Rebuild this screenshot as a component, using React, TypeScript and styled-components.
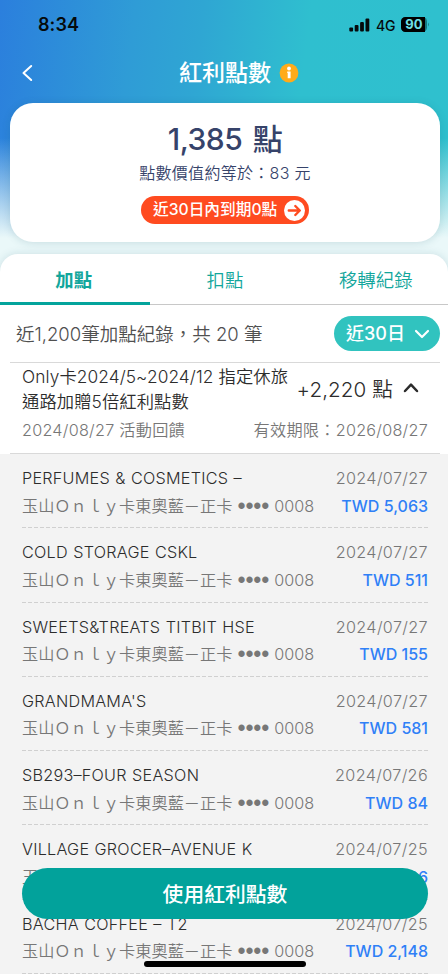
import React from "react";
import styled, { createGlobalStyle } from "styled-components";

const Global = createGlobalStyle`
  * { box-sizing: border-box; }
  body { margin: 0; background: #f3f3f3; }
  button { font: inherit; border: 0; padding: 0; background: none; color: inherit; }
`;

const Screen = styled.div`
  position: relative;
  width: 448px;
  height: 975px;
  overflow: hidden;
  display: flex;
  flex-direction: column;
  font-family: Inter, "Noto Sans CJK TC", sans-serif;
  font-weight: 350;
  white-space: nowrap;
  background:
    linear-gradient(180deg, rgba(234, 248, 249, 0) 138px, rgba(234, 248, 249, 0.5) 188px, #eaf8f9 238px),
    linear-gradient(97deg, #2b7fdd 0%, #2f9cd6 24%, #2fa6d3 36%, #2fbfcf 55%, #2fc1cd 100%);
`;

const StatusBar = styled.header`
  height: 50px;
  display: flex;
  align-items: center;
  justify-content: space-between;
  padding: 0 19px 1px 38px;
  color: #050a0c;
`;

const Clock = styled.span`
  font-size: 18px;
  font-weight: 600;
  letter-spacing: 0.1px;
`;

const Indicators = styled.div`
  display: flex;
  align-items: center;
`;

const Network = styled.span`
  margin: 1px 5px 0 6px;
  width: 20px;
  font-size: 14px;
  font-weight: 500;
  letter-spacing: -0.2px;
`;

const TitleBar = styled.div`
  height: 53px;
  display: grid;
  grid-template-columns: 179px auto 1fr;
  align-items: center;
  padding-bottom: 7px;
  color: #fff;
`;

const BackButton = styled.button`
  display: flex;
  padding-left: 21px;
`;

const Title = styled.h1`
  margin: 0;
  font-size: 23px;
  line-height: 30px;
  font-weight: 500;
`;

const InfoIcon = styled.svg`
  margin-left: 8px;
`;

const BalanceCard = styled.section`
  height: 139px;
  margin: 0 8px 0 10px;
  border-radius: 23px;
  background: #fff;
  box-shadow: 0 1px 8px rgba(20, 80, 100, 0.16);
  display: flex;
  flex-direction: column;
  align-items: center;
  color: #36436a;
`;

const Balance = styled.div`
  margin-top: 18px;
  font-size: 30px;
  line-height: 36px;
  font-weight: 500;
  letter-spacing: -0.5px;
  word-spacing: 3px;
`;

const Worth = styled.div`
  margin-top: 4px;
  font-size: 16px;
  line-height: 24px;
  letter-spacing: 0.3px;
`;

const ExpiryPill = styled.button`
  margin-top: 11px;
  width: 168px;
  height: 28px;
  border-radius: 14px;
  display: flex;
  align-items: center;
  justify-content: space-between;
  padding: 0 4px 0 12px;
  background: #ff4b20;
  color: #fff;
  font-size: 15.7px;
  font-weight: 500;
  line-height: 28px;
`;

const Sheet = styled.main`
  flex: 1;
  margin-top: 12px;
  border-radius: 18px 18px 0 0;
  background: #fff;
  overflow: hidden;
  box-shadow: 0 0 8px rgba(20, 80, 100, 0.15);
`;

const Tabs = styled.nav`
  height: 51px;
  display: grid;
  grid-template-columns: 149.5px 151px 150.5px;
  border-bottom: 1px solid #c8c8c8;
`;

const Tab = styled.button<{ $active?: boolean }>`
  height: 51px;
  padding: ${(p) => (p.$active ? "2px 2px 0 0" : "0 0 1px")};
  border-bottom: ${(p) => (p.$active ? "3.5px solid #04a49c" : "0")};
  color: #12a69c;
  font-size: 18.4px;
  font-weight: ${(p) => (p.$active ? 700 : 350)};
`;

const FilterBar = styled.div`
  height: 58px;
  margin: 0 8px 0 10px;
  padding-left: 6px;
  border-bottom: 1px solid #d9d9d9;
  display: flex;
  align-items: center;
  justify-content: space-between;
  color: #505050;
  font-size: 18.5px;
`;

const Summary = styled.span`
  padding-bottom: 2px;
`;

const PeriodButton = styled.button`
  width: 106px;
  height: 35px;
  border-radius: 18px;
  display: flex;
  align-items: center;
  justify-content: space-between;
  padding: 0 10px 0 12px;
  background: #31c3bf;
  color: #fff;
  font-size: 18px;
  font-weight: 500;
  line-height: 35px;
`;

const Reward = styled.section`
  height: 91px;
  margin: 0 8px 0 10px;
  padding: 2px 12px 0;
  border-bottom: 1px solid #d9d9d9;
`;

const RewardTop = styled.div`
  display: flex;
  justify-content: space-between;
  align-items: center;
  height: 49px;
  color: #2c2c2c;
`;

const RewardName = styled.div`
  font-size: 17.3px;
  line-height: 24.5px;
  letter-spacing: 0.1px;
`;

const RewardPoints = styled.div`
  display: flex;
  align-items: center;
  gap: 10px;
  padding: 0 9px 3px 0;
  font-size: 20.6px;
  letter-spacing: 0.1px;
`;

const RewardMeta = styled.div`
  margin-top: 4px;
  display: flex;
  justify-content: space-between;
  color: #777;
  font-size: 16.2px;
  letter-spacing: 0.25px;
  line-height: 24px;
`;

const List = styled.ul`
  margin: 0;
  padding: 0 20px 0 22px;
  list-style: none;
  background: #f3f3f3;
`;

const Item = styled.li`
  height: 74.3px;
  padding-top: 10px;
  background: repeating-linear-gradient(90deg, #d0d0d0 0 4px, transparent 4px 6px) 0 100% / 100% 1px no-repeat;
`;

const Line = styled.div`
  height: 28px;
  display: flex;
  justify-content: space-between;
  align-items: center;
  font-size: 16.2px;
  line-height: 28px;
  color: #777;
`;

const CardLine = styled(Line)`
  height: 27px;
  line-height: 24px;
`;

const Merchant = styled.span`
  color: #2c2c2c;
  letter-spacing: 0.25px;
  word-spacing: 0.5px;
`;

const DateText = styled.span`
  letter-spacing: 0.35px;
`;

const CardName = styled.span`
  display: flex;
  align-items: center;
`;

const Mask = styled.span`
  margin: 0 5px 0 5px;
  font-family: "Liberation Sans", sans-serif;
  font-size: 23px;
  letter-spacing: -0.1px;
`;

const Amount = styled.span`
  color: #2f80f7;
  font-size: 16px;
  font-weight: 500;
`;

const RedeemButton = styled.button`
  position: absolute;
  left: 22px;
  right: 20px;
  top: 868px;
  height: 51px;
  padding-bottom: 2px;
  border-radius: 26px;
  background: #02a29b;
  color: #fff;
  font-size: 20.8px;
  font-weight: 500;
`;

const HomeIndicator = styled.div`
  position: absolute;
  left: 144px;
  top: 961px;
  width: 162px;
  height: 6px;
  border-radius: 3px;
  background: #000;
`;

const Chevron = ({ d, w, h, sw }: { d: string; w: number; h: number; sw: number }) => (
  <svg width={w} height={h} viewBox={`0 0 ${w} ${h}`} fill="none" stroke="currentColor" strokeWidth={sw} strokeLinecap="round" strokeLinejoin="round">
    <path d={d} />
  </svg>
);

const records = [
  ["PERFUMES & COSMETICS –", "2024/07/27", "5,063"],
  ["COLD STORAGE CSKL", "2024/07/27", "511"],
  ["SWEETS&TREATS TITBIT HSE", "2024/07/27", "155"],
  ["GRANDMAMA'S", "2024/07/27", "581"],
  ["SB293–FOUR SEASON", "2024/07/26", "84"],
  ["VILLAGE GROCER–AVENUE K", "2024/07/25", "136"],
  ["BACHA COFFEE – T2", "2024/07/25", "2,148"],
];

export default function App() {
  return (
    <Screen lang="zh-Hant">
      <Global />
      <StatusBar>
        <Clock>8:34</Clock>
        <Indicators>
          <svg width="21" height="14" viewBox="0 0 21 14" fill="currentColor">
            <rect x="0.300" y="9.500" width="3.800" height="4" rx="1" />
            <rect x="5.700" y="7" width="3.800" height="6.500" rx="1" />
            <rect x="11.100" y="4" width="3.800" height="9.500" rx="1" />
            <rect x="16.500" y="0.500" width="3.800" height="13" rx="1" />
          </svg>
          <Network>4G</Network>
          <svg width="28" height="15" viewBox="0 0 28 15">
            <rect x="0" y="0" width="26" height="15" rx="4.5" fill="#15777f" />
            <path d="M4.500 0H24V15H4.500A4.500 4.500 0 0 1 0 10.500V4.500A4.500 4.500 0 0 1 4.500 0Z" fill="#000" />
            <path d="M27 5.500Q28.500 7.500 27 9.500Z" fill="#15777f" />
            <text x="12.800" y="12" textAnchor="middle" fontSize="13" fontWeight="700" fill="#6fe0e6">90</text>
          </svg>
        </Indicators>
      </StatusBar>
      <TitleBar>
        <BackButton aria-label="返回">
          <Chevron w={12} h={18} sw={2} d="M10.200 2L2.500 9L10.200 16" />
        </BackButton>
        <Title>紅利點數</Title>
        <InfoIcon width="20" height="20" viewBox="0 0 20 20">
          <circle cx="10" cy="10" r="9.400" fill="#ffab1a" />
          <circle cx="10" cy="5.500" r="1.900" fill="#fff" />
          <path d="M8.200 8.500H11.600V15.300H8.700V10H8.200Z" fill="#fff" />
        </InfoIcon>
      </TitleBar>
      <BalanceCard>
        <Balance>1,385 點</Balance>
        <Worth>點數價值約等於：83 元</Worth>
        <ExpiryPill>
          <span>近30日內到期0點</span>
          <svg width="21" height="21" viewBox="0 0 21 21" fill="none">
            <circle cx="10.500" cy="10.500" r="10.500" fill="#fff" />
            <path d="M4.800 10.500H15.500M11.300 6L15.800 10.500L11.300 15" stroke="#ff4b20" strokeWidth="2.400" strokeLinecap="round" strokeLinejoin="round" />
          </svg>
        </ExpiryPill>
      </BalanceCard>
      <Sheet>
        <Tabs>
          <Tab $active>加點</Tab>
          <Tab>扣點</Tab>
          <Tab>移轉紀錄</Tab>
        </Tabs>
        <FilterBar>
          <Summary>近1,200筆加點紀錄，共 20 筆</Summary>
          <PeriodButton>
            <span>近30日</span>
            <Chevron w={16} h={12} sw={2.2} d="M2 3L8 9L14 3" />
          </PeriodButton>
        </FilterBar>
        <Reward>
          <RewardTop>
            <RewardName>
              Only卡2024/5~2024/12 指定休旅
              <br />
              通路加贈5倍紅利點數
            </RewardName>
            <RewardPoints>
              +2,220 點
              <Chevron w={16} h={12} sw={2.5} d="M2 9L8 2.600L14 9" />
            </RewardPoints>
          </RewardTop>
          <RewardMeta>
            <span>2024/08/27 活動回饋</span>
            <span>有效期限：2026/08/27</span>
          </RewardMeta>
        </Reward>
        <List>
          {records.map(([name, date, amount]) => (
            <Item key={name}>
              <Line>
                <Merchant>{name}</Merchant>
                <DateText>{date}</DateText>
              </Line>
              <CardLine>
                <CardName>
                  玉山Ｏｎｌｙ卡東奧藍－正卡<Mask>••••</Mask>0008
                </CardName>
                <Amount>TWD {amount}</Amount>
              </CardLine>
            </Item>
          ))}
        </List>
      </Sheet>
      <RedeemButton>使用紅利點數</RedeemButton>
      <HomeIndicator />
    </Screen>
  );
}
